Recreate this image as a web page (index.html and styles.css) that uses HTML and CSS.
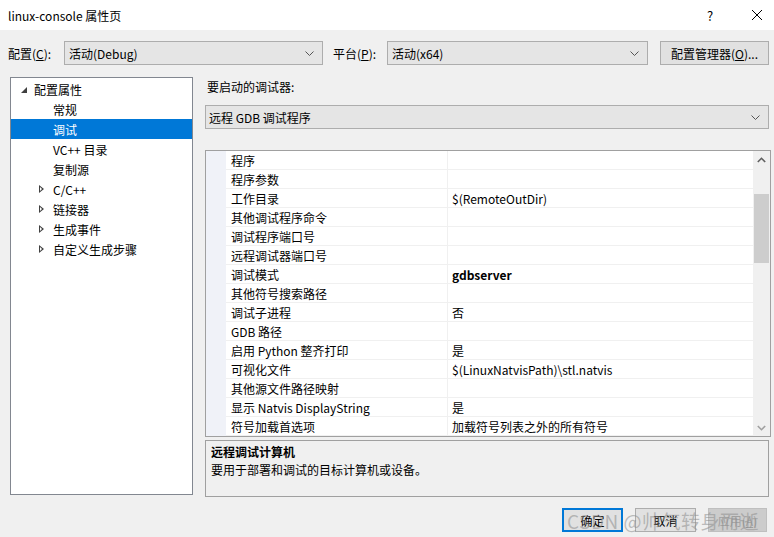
FILE: index.html
```html
<!DOCTYPE html>
<html lang="zh">
<head>
<meta charset="utf-8">
<title>linux-console 属性页</title>
<link rel="stylesheet" href="styles.css">
</head>
<body>
<div class="dialog">
  <div class="titlebar">
    <span class="title">linux-console 属性页</span>
    <span class="tb-help">?</span>
    <span class="tb-close"><svg width="12" height="12" viewBox="0 0 12 12"><path d="M1 1L11 11M11 1L1 11" stroke="#000" stroke-width="1" fill="none"/></svg></span>
  </div>
  <div class="toolbar">
    <span class="lbl lbl1">配置(<u>C</u>):</span>
    <div class="combo combo1"><span>活动(Debug)</span><svg class="chev" width="9" height="5" viewBox="0 0 9 5"><path d="M0.5 0.5L4.5 4.5L8.5 0.5" stroke="#555" fill="none"/></svg></div>
    <span class="lbl lbl2">平台(<u>P</u>):</span>
    <div class="combo combo2"><span>活动(x64)</span><svg class="chev" width="9" height="5" viewBox="0 0 9 5"><path d="M0.5 0.5L4.5 4.5L8.5 0.5" stroke="#555" fill="none"/></svg></div>
    <button class="btn btn-mgr">配置管理器(<u>O</u>)...</button>
  </div>
  <div class="main">
    <div class="tree">
      <div class="node lvl0"><span class="exp-open"></span>配置属性</div>
      <div class="node lvl1">常规</div>
      <div class="node lvl1 sel">调试</div>
      <div class="node lvl1">VC++ 目录</div>
      <div class="node lvl1">复制源</div>
      <div class="node lvl1c"><span class="exp-closed"></span>C/C++</div>
      <div class="node lvl1c"><span class="exp-closed"></span>链接器</div>
      <div class="node lvl1c"><span class="exp-closed"></span>生成事件</div>
      <div class="node lvl1c"><span class="exp-closed"></span>自定义生成步骤</div>
    </div>
    <div class="right">
      <div class="dbg-label">要启动的调试器:</div>
      <div class="combo combo3"><span>远程 GDB 调试程序</span><svg class="chev" width="9" height="5" viewBox="0 0 9 5"><path d="M0.5 0.5L4.5 4.5L8.5 0.5" stroke="#555" fill="none"/></svg></div>
      <div class="grid">
        <div class="rows">
          <div class="row"><span class="gut"></span><span class="name">程序</span><span class="val"></span></div>
          <div class="row"><span class="gut"></span><span class="name">程序参数</span><span class="val"></span></div>
          <div class="row"><span class="gut"></span><span class="name">工作目录</span><span class="val">$(RemoteOutDir)</span></div>
          <div class="row"><span class="gut"></span><span class="name">其他调试程序命令</span><span class="val"></span></div>
          <div class="row"><span class="gut"></span><span class="name">调试程序端口号</span><span class="val"></span></div>
          <div class="row"><span class="gut"></span><span class="name">远程调试器端口号</span><span class="val"></span></div>
          <div class="row"><span class="gut"></span><span class="name">调试模式</span><span class="val bold">gdbserver</span></div>
          <div class="row"><span class="gut"></span><span class="name">其他符号搜索路径</span><span class="val"></span></div>
          <div class="row"><span class="gut"></span><span class="name">调试子进程</span><span class="val">否</span></div>
          <div class="row"><span class="gut"></span><span class="name">GDB 路径</span><span class="val"></span></div>
          <div class="row"><span class="gut"></span><span class="name">启用 Python 整齐打印</span><span class="val">是</span></div>
          <div class="row"><span class="gut"></span><span class="name">可视化文件</span><span class="val">$(LinuxNatvisPath)\stl.natvis</span></div>
          <div class="row"><span class="gut"></span><span class="name">其他源文件路径映射</span><span class="val"></span></div>
          <div class="row"><span class="gut"></span><span class="name">显示 Natvis DisplayString</span><span class="val">是</span></div>
          <div class="row"><span class="gut"></span><span class="name">符号加载首选项</span><span class="val">加载符号列表之外的所有符号</span></div>
        </div>
        <div class="vscroll">
          <div class="arrow"><svg width="9" height="6" viewBox="0 0 9 6"><path d="M0.8 5L4.5 1.3L8.2 5" stroke="#606060" stroke-width="1.6" fill="none"/></svg></div>
          <div class="track"><div class="thumb"></div></div>
          <div class="arrow"><svg width="9" height="6" viewBox="0 0 9 6"><path d="M0.8 1L4.5 4.7L8.2 1" stroke="#a0a0a0" stroke-width="1.6" fill="none"/></svg></div>
        </div>
      </div>
      <div class="desc">
        <div class="desc-title">远程调试计算机</div>
        <div class="desc-text">要用于部署和调试的目标计算机或设备。</div>
      </div>
    </div>
  </div>
  <div class="buttons">
    <button class="btn dlg default">确定</button>
    <button class="btn dlg">取消</button>
    <button class="btn dlg disabled">应用(<u>A</u>)</button>
  </div>
  <div class="watermark">CSDN @帅气转身而逝</div>
</div>
</body>
</html>
```
FILE: styles.css
```css
* { box-sizing: border-box; }
html, body { margin: 0; padding: 0; }
body {
  width: 774px; height: 537px; overflow: hidden;
  background: #f0f0f0;
  font-family: "Microsoft YaHei UI", "Noto Sans CJK SC", "Noto Sans", sans-serif;
  font-size: 12px; color: #000;
}
.dialog { position: relative; width: 774px; height: 537px; }
.titlebar {
  height: 30px; background: #fff; display: flex; align-items: center;
  padding-left: 8px; position: relative;
}
.title { font-size: 12px; flex: 1; }
.tb-help { width: 14px; text-align: center; margin-right: 34px; font-size: 13px; }
.tb-close { width: 12px; margin-right: 11px; display: flex; }
u { text-decoration: underline; text-underline-offset: 1px; }
.toolbar {
  display: flex; align-items: center; margin-top: 11px; height: 24px;
  padding-left: 8px;
}
.lbl { white-space: nowrap; }
.lbl1 { width: 56px; }
.lbl2 { width: 54px; margin-left: 10px; }
.combo {
  height: 24px; border: 1px solid #adadad; background: #e5e5e5;
  display: flex; align-items: center; padding-left: 4px; padding-right: 8px;
  justify-content: space-between;
}
.combo1 { width: 259px; }
.combo2 { width: 261px; }
.chev { flex: none; }
.btn {
  font-family: inherit; font-size: 12px; color: #000;
  height: 24px; border: 1px solid #adadad; background: #e1e1e1; padding: 0;
}
.btn-mgr { width: 109px; margin-left: 12px; }
.main { display: flex; margin-top: 12px; padding-left: 10px; }
.tree {
  width: 183px; height: 418px; background: #fff; border: 1px solid #828790;
  padding-top: 1px;
}
.node { height: 20px; display: flex; align-items: center; position: relative; }
.lvl0 { padding-left: 10px; }
.lvl1 { padding-left: 42px; }
.lvl1c { padding-left: 28px; }
.sel { background: #0078d7; color: #fff; }
.exp-open {
  width: 0; height: 0; border-left: 6px solid transparent; border-bottom: 6px solid #404040;
  margin-right: 7px; margin-top: 1px;
}
.exp-closed {
  width: 0; height: 0; border-top: 4px solid transparent; border-bottom: 4px solid transparent;
  border-left: 5px solid #404040; margin-right: 9px; position: relative;
}
.exp-closed::after {
  content: ""; position: absolute; left: -4px; top: -2px; width: 0; height: 0;
  border-top: 2px solid transparent; border-bottom: 2px solid transparent;
  border-left: 2.5px solid #fff;
}
.right { margin-left: 12px; width: 566px; }
.dbg-label { height: 20px; line-height: 20px; margin-left: 2px; margin-top: 0; }
.combo3 { width: 564px; margin-top: 8px; padding-left: 3px; }
.grid {
  margin-top: 21px; width: 566px; height: 287px; border: 1px solid #a0a0a0; background: #fff;
  display: flex;
}
.rows { flex: 1; }
.row { height: 19px; display: flex; align-items: center; }
.gut { width: 20px; height: 19px; background: #f0f2f8; flex: none; }
.name {
  width: 222px; height: 19px; line-height: 19px; padding-left: 5px;
  border-bottom: 1px solid #f0f0f0; border-right: 1px solid #f0f0f0; white-space: nowrap;
}
.val {
  flex: 1; height: 19px; line-height: 19px; padding-left: 4px;
  border-bottom: 1px solid #f0f0f0; white-space: nowrap;
}
.bold { font-weight: bold; }
.vscroll { width: 17px; background: #f0f0f0; display: flex; flex-direction: column; }
.arrow { height: 17px; display: flex; align-items: center; justify-content: center; }
.track { flex: 1; position: relative; }
.thumb { position: absolute; left: 1px; right: 1px; top: 26px; height: 69px; background: #cdcdcd; }
.desc {
  width: 564px; height: 57px; margin-top: 3px; border: 1px solid #a0a0a0;
  padding: 2px 5px;
}
.desc-title { font-weight: bold; height: 18px; line-height: 18px; }
.desc-text { height: 18px; line-height: 18px; }
.buttons {
  display: flex; justify-content: flex-end; gap: 12px; margin-top: 11px; padding-right: 7px;
}
.dlg { width: 61px; height: 24px; }
.default { border: 2px solid #0078d7; }
.disabled { color: #a0a0a0; background: #cccccc; border-color: #bfbfbf; width: 59px; }
.watermark {
  position: absolute; left: 567px; top: 507px; font-size: 19px; color: rgba(140,140,140,0.55);
  white-space: nowrap; pointer-events: none; letter-spacing: 0.5px;
}
```
